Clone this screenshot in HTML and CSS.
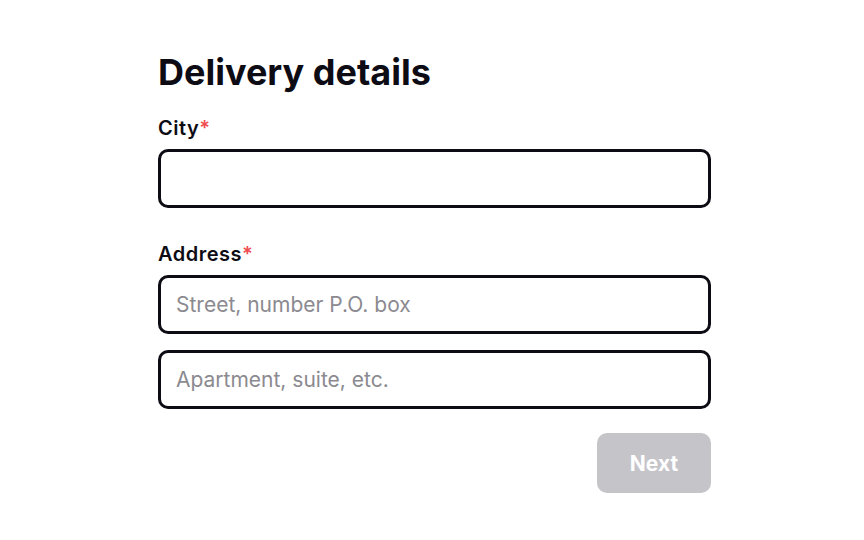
FILE: index.html
```html
<!DOCTYPE html>
<html lang="en">
<head>
<meta charset="utf-8">
<link rel="stylesheet" href="styles.css">
</head>
<body>
<main class="form">
  <h1 class="title">Delivery details</h1>
  <div class="field">
    <label class="label" for="city">City<span class="req">*</span></label>
    <input class="input" id="city" type="text">
  </div>
  <div class="field">
    <label class="label" for="addr1">Address<span class="req">*</span></label>
    <input class="input" id="addr1" type="text" placeholder="Street, number P.O. box">
    <input class="input" id="addr2" type="text" placeholder="Apartment, suite, etc.">
  </div>
  <div class="actions">
    <button class="btn" type="button">Next</button>
  </div>
</main>
</body>
</html>
```
FILE: styles.css
```css
* { box-sizing: border-box; }
html, body { margin: 0; padding: 0; background: #fff; }
body { font-family: Inter, "Noto Sans", sans-serif; color: #0d0c14; }
.form {
  width: 553px;
  margin-left: 158px;
  padding-top: 50px;
  display: flex;
  flex-direction: column;
}
.title {
  margin: 0;
  font-size: 36px;
  font-weight: 700;
  line-height: 44px;
}
.field {
  display: flex;
  flex-direction: column;
  gap: 16px;
  margin-top: 22px;
}
.field + .field { margin-top: 34px; }
.label {
  font-size: 20px;
  font-weight: 600;
  letter-spacing: 0.5px;
  line-height: 24px;
  margin-bottom: -7px;
}
.req { color: #f04a4f; }
.input {
  height: 59px;
  border: 3px solid #0d0c14;
  border-radius: 10px;
  padding: 0 15px;
  font-family: inherit;
  font-size: 21px;
  color: #0d0c14;
  outline: none;
  background: #fff;
}
.input::placeholder { color: #8b8a90; }
.actions {
  display: flex;
  justify-content: flex-end;
  margin-top: 24px;
}
.btn {
  width: 114px;
  height: 60px;
  border: none;
  border-radius: 10px;
  background: #c5c4c9;
  color: #fff;
  font-family: inherit;
  font-size: 21px;
  font-weight: 700;
}
```
